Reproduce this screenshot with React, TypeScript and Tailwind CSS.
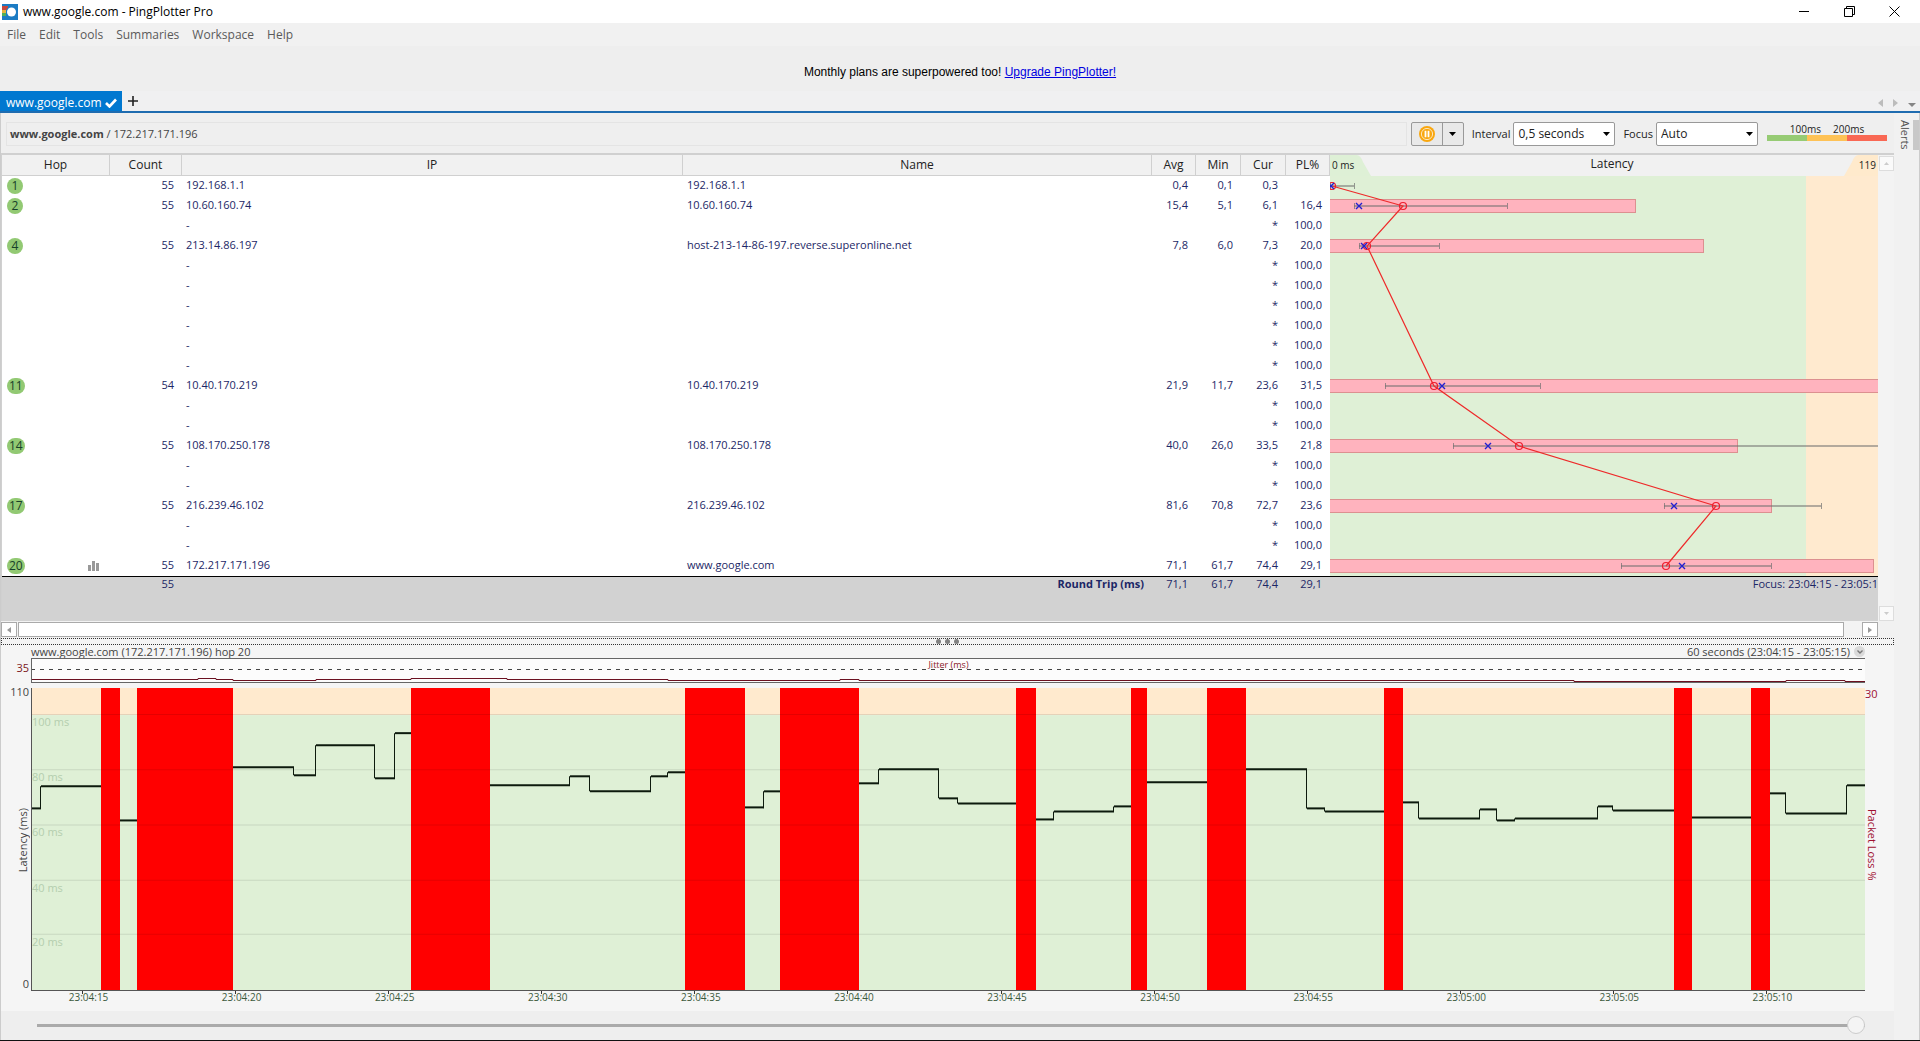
import React from 'react';

interface Hop {
  hop: number;
  count?: number;
  ip?: string;
  name?: string;
  avg?: string;
  min?: string;
  cur?: string;
  pl?: string;
}

interface LatencyMark {
  hop: number;
  bar?: number;
  low: number;
  high: number;
  avg: number;
  cur: number;
}

type Step = [x: number, y: number];

const answered: Hop[] = [
  { hop: 1, count: 55, ip: '192.168.1.1', name: '192.168.1.1', avg: '0,4', min: '0,1', cur: '0,3' },
  { hop: 2, count: 55, ip: '10.60.160.74', name: '10.60.160.74', avg: '15,4', min: '5,1', cur: '6,1', pl: '16,4' },
  { hop: 4, count: 55, ip: '213.14.86.197', name: 'host-213-14-86-197.reverse.superonline.net', avg: '7,8', min: '6,0', cur: '7,3', pl: '20,0' },
  { hop: 11, count: 54, ip: '10.40.170.219', name: '10.40.170.219', avg: '21,9', min: '11,7', cur: '23,6', pl: '31,5' },
  { hop: 14, count: 55, ip: '108.170.250.178', name: '108.170.250.178', avg: '40,0', min: '26,0', cur: '33,5', pl: '21,8' },
  { hop: 17, count: 55, ip: '216.239.46.102', name: '216.239.46.102', avg: '81,6', min: '70,8', cur: '72,7', pl: '23,6' },
  { hop: 20, count: 55, ip: '172.217.171.196', name: 'www.google.com', avg: '71,1', min: '61,7', cur: '74,4', pl: '29,1' },
];

const hops: Hop[] = Array.from({ length: 20 }, (_, i) => answered.find(h => h.hop === i + 1) ?? { hop: i + 1 });

// x values on a 548 wide latency canvas, one row is 20 high
const marks: LatencyMark[] = [
  { hop: 1, low: 0, high: 24, avg: 2, cur: 1 },
  { hop: 2, bar: 305, low: 24, high: 177, avg: 73, cur: 29 },
  { hop: 4, bar: 373, low: 29, high: 109, avg: 37, cur: 34 },
  { hop: 11, bar: 560, low: 55, high: 210, avg: 104, cur: 112 },
  { hop: 14, bar: 407, low: 123, high: 560, avg: 189, cur: 158 },
  { hop: 17, bar: 441, low: 334, high: 491, avg: 386, cur: 344 },
  { hop: 20, bar: 543, low: 291, high: 441, avg: 336, cur: 352 },
];

const rowY = (hop: number) => hop * 20 - 10;

// Timeline canvas is 1834 x 301
const lossBars: Step[] = [
  [70, 89], [106, 202], [380, 459], [654, 714], [749, 828], [985, 1005],
  [1100, 1116], [1176, 1215], [1353, 1372], [1643, 1661], [1720, 1739],
];

// Every run is a start x followed by [end x, y] steps
const runs: { from: number; steps: Step[] }[] = [
  { from: 0, steps: [[10, 120], [70, 98]] },
  { from: 89, steps: [[106, 132]] },
  { from: 202, steps: [[263, 79], [285, 87], [344, 57], [364, 90], [380, 45]] },
  { from: 459, steps: [[539, 97], [559, 88], [620, 103], [637, 88], [654, 84]] },
  { from: 714, steps: [[733, 119], [749, 103]] },
  { from: 828, steps: [[848, 95], [908, 81], [927, 110], [985, 115]] },
  { from: 1005, steps: [[1023, 131], [1083, 123], [1100, 118]] },
  { from: 1116, steps: [[1176, 94]] },
  { from: 1215, steps: [[1276, 81], [1294, 120], [1353, 123]] },
  { from: 1372, steps: [[1388, 114], [1449, 130], [1466, 121], [1484, 132], [1567, 130], [1582, 118], [1643, 122]] },
  { from: 1661, steps: [[1720, 129]] },
  { from: 1739, steps: [[1755, 105], [1816, 125], [1834, 97]] },
];

const jitter: Step[] = [
  [167, 21], [185, 20], [202, 21], [285, 22], [380, 21], [476, 20], [637, 21],
  [809, 22], [828, 21], [1543, 22], [1755, 23], [1814, 22], [1834, 23],
];

const gridLines = [
  { label: '100 ms', top: 27 },
  { label: '80 ms', top: 82 },
  { label: '60 ms', top: 137 },
  { label: '40 ms', top: 192 },
  { label: '20 ms', top: 246 },
];

const times = [
  '23:04:15', '23:04:20', '23:04:25', '23:04:30', '23:04:35', '23:04:40',
  '23:04:45', '23:04:50', '23:04:55', '23:05:00', '23:05:05', '23:05:10',
];

const Logo = () => (
  <svg width="16" height="16" viewBox="0 0 16 16">
    <rect width="16" height="16" fill="#1c7cc4" />
    <rect y="2" width="6" height="4" fill="#c8473b" />
    <rect y="6" width="4" height="3" fill="#e8b33c" />
    <rect y="9" width="4" height="3" fill="#4fae5a" />
    <circle cx="9.5" cy="8" r="5.5" fill="#1c7cc4" />
    <circle cx="9.5" cy="8" r="4.5" fill="#fff" />
  </svg>
);

const TitleBar = () => (
  <header className="flex h-[23px] items-center bg-white pr-[3px] pl-[2px] text-[12px] text-black">
    <Logo />
    <h1 className="ml-[5px] flex-1">www.google.com - PingPlotter Pro</h1>
    <button aria-label="Minimize" className="flex h-full w-[45px] items-center justify-center">
      <svg width="11" height="11" viewBox="0 0 11 11"><path d="M0 5.5h10" stroke="#000" /></svg>
    </button>
    <button aria-label="Restore" className="flex h-full w-[45px] items-center justify-center">
      <svg width="11" height="11" viewBox="0 0 11 11" fill="none" stroke="#000">
        <path d="M.5 2.5h8v8h-8zM2.5 2.5v-2h8v8h-2" />
      </svg>
    </button>
    <button aria-label="Close" className="flex h-full w-[45px] items-center justify-center">
      <svg width="11" height="11" viewBox="0 0 11 11" stroke="#000"><path d="M.5.5l10 10M10.5.5l-10 10" /></svg>
    </button>
  </header>
);

const MenuBar = () => (
  <nav className="flex h-[23px] items-center gap-[13px] bg-[#f1f1f1] pl-[7px] text-[12px] text-[#5a5a5a]">
    {['File', 'Edit', 'Tools', 'Summaries', 'Workspace', 'Help'].map(item => (
      <button key={item}>{item}</button>
    ))}
  </nav>
);

const TabStrip = () => (
  <div className="flex h-5 items-center bg-[#f0f0f1]">
    <button className="flex h-full w-[122px] items-center justify-between bg-[#0078d0] pt-[3px] pr-[5px] pl-[6px] text-[12px] text-white">
      www.google.com
      <svg width="12" height="10" viewBox="0 0 12 10"><path d="M1 5l3.5 3.5L11 1.5" fill="none" stroke="#fff" strokeWidth="2.6" /></svg>
    </button>
    <button aria-label="New tab" className="ml-[6px]">
      <svg width="10" height="10" viewBox="0 0 10 10"><path d="M5 0v10M0 5h10" stroke="#222" strokeWidth="1.6" /></svg>
    </button>
    <div className="ml-auto flex items-center gap-[10px] pt-[3px] pr-1">
      <svg width="5" height="8" viewBox="0 0 5 8"><path d="M5 0v8L0 4z" fill="#bcbcbc" /></svg>
      <svg width="5" height="8" viewBox="0 0 5 8"><path d="M0 0v8l5-4z" fill="#bcbcbc" /></svg>
      <svg width="8" height="8" viewBox="0 0 8 8"><path d="M0 4h8L4 8z" fill="#858585" /></svg>
    </div>
  </div>
);

interface PickerProps {
  id: string;
  label: string;
  value: string;
}

const Picker: React.FC<PickerProps> = ({ id, label, value }) => (
  <div className="flex items-center gap-[3px]">
    <label htmlFor={id}>{label}</label>
    <div className="relative">
      <select id={id} className="h-6 w-[102px] appearance-none rounded-[2px] border border-[#999] bg-white pl-1 text-[12px]">
        <option>{value}</option>
      </select>
      <svg className="pointer-events-none absolute top-[10px] right-[5px]" width="7" height="4" viewBox="0 0 7 4"><path d="M0 0h7L3.5 4z" fill="#000" /></svg>
    </div>
  </div>
);

const Toolbar = () => (
  <div className="flex h-10 items-center bg-[#efefef] pt-[2px] pr-[7px] pl-[5px] text-[11px] text-[#222]">
    <div className="flex h-6 flex-1 items-center border border-[#e4e4e4] pl-[3px] text-[#444]">
      <b>www.google.com</b>&nbsp;/ 172.217.171.196
    </div>
    <div className="mr-2 ml-1 flex h-6 rounded-[2px] border border-[#999] bg-[#e9e9e9]">
      <button aria-label="Pause" className="flex w-[30px] items-center justify-center">
        <svg width="16" height="16" viewBox="0 0 16 16">
          <circle cx="8" cy="8" r="8" fill="#f9a70f" />
          <circle cx="8" cy="8" r="5.6" fill="none" stroke="#fde6bd" />
          <path d="M6.5 4.8v6.4M9.5 4.8v6.4" stroke="#fff" strokeWidth="1.8" />
        </svg>
      </button>
      <button aria-label="Pause options" className="flex w-[21px] items-center justify-center border-l border-[#999]">
        <svg width="7" height="4" viewBox="0 0 7 4"><path d="M0 0h7L3.5 4z" fill="#000" /></svg>
      </button>
    </div>
    <div className="flex gap-2">
      <Picker id="interval" label="Interval" value="0,5 seconds" />
      <Picker id="focus" label="Focus" value="Auto" />
    </div>
    <div className="ml-[9px] w-[120px] pb-1">
      <div className="flex justify-center gap-3 text-[10px] leading-[12px]">
        <span>100ms</span>
        <span>200ms</span>
      </div>
      <div className="flex h-[6px]">
        <div className="flex-1 bg-[#96cb74]" />
        <div className="flex-1 bg-[#fec256]" />
        <div className="flex-1 bg-[#f96854]" />
      </div>
    </div>
  </div>
);

const HopTable = () => (
  <table className="min-w-0 flex-1 table-fixed border-separate border-spacing-0 bg-white text-[11px] leading-[18px] text-[#1c2766]">
    <colgroup>
      <col className="w-[108px]" />
      <col className="w-[72px]" />
      <col className="w-[501px]" />
      <col />
      <col className="w-[44px]" />
      <col className="w-[45px]" />
      <col className="w-[45px]" />
      <col className="w-[44px]" />
    </colgroup>
    <thead>
      <tr className="h-[21px] bg-[#f1f1f1] align-top text-[12px] leading-[20px] text-[#222]">
        {['Hop', 'Count', 'IP', 'Name', 'Avg', 'Min', 'Cur', 'PL%'].map(head => (
          <th key={head} className="border-r border-b border-[#d0d0d0] p-0 font-normal">{head}</th>
        ))}
      </tr>
    </thead>
    <tbody>
      {hops.map(hop => (
        <tr key={hop.hop} className="h-5 align-top">
          <td className="p-0 pt-[2px] pr-[11px] pl-[5px]">
            {hop.count && (
              <div className="flex items-center justify-between">
                <span className="h-4 min-w-4 rounded-full bg-[#92c973] px-[2px] text-center text-[12px] leading-[15px] text-[#17402a]">{hop.hop}</span>
                {hop.hop === 20 && (
                  <svg width="11" height="10" viewBox="0 0 11 10"><path d="M0 4h3v6H0zM4 0h3v10H4zM8 2h3v8H8z" fill="#999" /></svg>
                )}
              </div>
            )}
          </td>
          <td className="p-0 pr-2 text-right">{hop.count}</td>
          <td className="p-0 pl-1">{hop.ip ?? '-'}</td>
          <td className="p-0 pl-1">{hop.name}</td>
          <td className="p-0 pr-2 text-right">{hop.avg}</td>
          <td className="p-0 pr-2 text-right">{hop.min}</td>
          <td className="p-0 pr-2 text-right">{hop.cur ?? '*'}</td>
          <td className="p-0 pr-2 text-right">{hop.count ? hop.pl : '100,0'}</td>
        </tr>
      ))}
    </tbody>
    <tfoot>
      <tr className="h-[45px] bg-[#d2d2d2] text-right align-top leading-[14px]">
        <td className="border-t border-black p-0" />
        <td className="border-t border-black p-0 pr-2">55</td>
        <td className="border-t border-black p-0" />
        <td className="border-t border-black p-0 pr-2 font-bold">Round Trip (ms)</td>
        <td className="border-t border-black p-0 pr-2">71,1</td>
        <td className="border-t border-black p-0 pr-2">61,7</td>
        <td className="border-t border-black p-0 pr-2">74,4</td>
        <td className="border-t border-black p-0 pr-2">29,1</td>
      </tr>
    </tfoot>
  </table>
);

const LatencyGraph = () => (
  <section className="w-[548px] shrink-0 text-[11px]">
    <div className="relative flex h-[21px] items-center justify-between bg-[#f1f1f1] px-[2px] text-[#222]">
      <svg className="absolute inset-0 h-full w-full" viewBox="0 0 548 21" preserveAspectRatio="none">
        <path d="M0 0h27q4 1 6 7l8 14H0z" fill="#def0d6" />
        <path d="M548 0h-20q-4 1-6 7l-8 14h34z" fill="#ffeacc" />
      </svg>
      <span className="relative text-[10px]">0 ms</span>
      <h2 className="relative pb-1 pl-[11px] text-[12px] leading-[16px]">Latency</h2>
      <span className="relative text-[10px]">119</span>
    </div>
    <svg className="block h-[400px] w-full" viewBox="0 0 548 400" preserveAspectRatio="none" fill="none">
      <rect width="476" height="400" fill="#dff0d6" />
      <rect x="476" width="72" height="400" fill="#ffeacf" />
      {marks.map(m => m.bar && (
        <rect key={m.hop} x="-1" y={rowY(m.hop) - 6.5} width={m.bar + 1.5} height="13" fill="#ffb3be" stroke="#dc9090" />
      ))}
      {marks.map(m => (
        <g key={m.hop} stroke="#6f6f6f" strokeOpacity="0.7">
          <path d={`M${m.low} ${rowY(m.hop)}H${m.high}`} strokeWidth="1.5" />
          <path d={`M${m.low + 0.5} ${rowY(m.hop) - 3}v6M${m.high + 0.5} ${rowY(m.hop) - 3}v6`} />
        </g>
      ))}
      <polyline points={marks.map(m => `${m.avg},${rowY(m.hop)}`).join(' ')} stroke="#ee2a2a" strokeWidth="1.2" />
      {marks.map(m => (
        <g key={m.hop}>
          <circle cx={m.avg} cy={rowY(m.hop)} r="3.5" stroke="#ee1c2e" strokeWidth="1.2" />
          <path d={`M${m.cur - 3} ${rowY(m.hop) - 3}l6 6m0-6l-6 6`} stroke="#2222d0" strokeWidth="1.4" />
        </g>
      ))}
    </svg>
    <div className="h-[45px] border-t border-black bg-[#d2d2d2] text-right leading-[14px] text-[#1c2766]">
      Focus: 23:04:15 - 23:05:1
    </div>
  </section>
);

const VerticalScroll = () => (
  <div className="flex w-4 shrink-0 flex-col justify-between bg-[#f3f3f3] pt-px pl-px">
    <button aria-label="Scroll up" className="flex h-[15px] w-[15px] items-center justify-center border border-[#ddd] bg-[#fafafa]">
      <svg width="5" height="3" viewBox="0 0 5 3"><path d="M0 3h5L2.5 0z" fill="#ccc" /></svg>
    </button>
    <button aria-label="Scroll down" className="flex h-[15px] w-[15px] items-center justify-center border border-[#ddd] bg-[#fafafa]">
      <svg width="5" height="3" viewBox="0 0 5 3"><path d="M0 0h5L2.5 3z" fill="#ccc" /></svg>
    </button>
  </div>
);

const HorizontalScroll = () => (
  <div className="mr-4 flex h-[17px] items-center bg-[#f3f3f3]">
    <button aria-label="Scroll left" className="flex h-[15px] w-4 items-center justify-center border border-[#aaa] bg-white">
      <svg width="4" height="6" viewBox="0 0 4 6"><path d="M4 0v6L0 3z" fill="#999" /></svg>
    </button>
    <div className="ml-px h-[15px] flex-1 border border-[#aaa] bg-white" />
    <button aria-label="Scroll right" className="ml-[18px] flex h-[15px] w-4 items-center justify-center border border-[#aaa] bg-white">
      <svg width="4" height="6" viewBox="0 0 4 6"><path d="M0 0v6l4-3z" fill="#999" /></svg>
    </button>
  </div>
);

const Splitter = () => (
  <div className="flex h-[7px] items-center justify-center gap-[4px] border border-dotted border-[#333] bg-[#f4f4f4]">
    <i className="h-[5px] w-[5px] rounded-full bg-[#808080]" />
    <i className="h-[5px] w-[5px] rounded-full bg-[#808080]" />
    <i className="h-[5px] w-[5px] rounded-full bg-[#808080]" />
  </div>
);

const jitterPath = jitter.map(([x, y], i) => `${i ? 'V' : 'M0 '}${y - 0.5}H${x}`).join('');

const Timeline = () => (
  <section className="flex min-h-0 flex-1 flex-col bg-[#f5f5f5] text-[11px] text-[#444]">
    <div className="mr-[29px] ml-[30px] flex h-[13px] items-center justify-between leading-[13px]">
      <h2>www.google.com (172.217.171.196) hop 20</h2>
      <div className="flex items-center gap-1">
        <span>60 seconds (23:04:15 - 23:05:15)</span>
        <button aria-label="Time range" className="flex h-[11px] w-[11px] items-center justify-center rounded-full bg-[#dadada]">
          <svg width="6" height="4" viewBox="0 0 6 4"><path d="M.5.5L3 3 5.5.5" fill="none" stroke="#777" strokeWidth="1.4" /></svg>
        </button>
      </div>
    </div>
    <div className="flex h-[25px]">
      <span className="w-[30px] pr-[2px] text-right leading-[20px] text-[#7c1620]">35</span>
      <div className="relative flex-1 border-y border-l border-[#666] bg-[#fcfcfc]">
        <svg className="block h-full w-full" viewBox="1 0 1833 23" preserveAspectRatio="none" fill="none">
          <path d="M0 10.5H1834" stroke="#444" strokeDasharray="4 5" />
          <path d={jitterPath} stroke="#6b1020" />
        </svg>
        <span className="absolute inset-x-0 top-0 text-center text-[9px] leading-[11px] text-[#8b1a2a]">Jitter (ms)</span>
      </div>
      <span className="w-[29px]" />
    </div>
    <div className="mt-[5px] flex min-h-[302px] flex-1">
      <div className="flex w-[30px] flex-col items-end justify-between pr-[2px]">
        <span className="leading-[8px]">110</span>
        <span className="mt-2 rotate-180 [writing-mode:vertical-rl] leading-[13px]">Latency (ms)</span>
        <span className="leading-[15px]">0</span>
      </div>
      <div className="relative flex-1 border-b border-l border-[#555]">
        <svg className="absolute inset-0 h-full w-full" viewBox="1 0 1833 301" preserveAspectRatio="none">
          <rect width="1834" height="27" fill="#ffeace" />
          <rect y="27" width="1834" height="274" fill="#dff0d6" />
        </svg>
        <div className="absolute inset-0">
          {gridLines.map(line => (
            <span key={line.label} className="absolute left-0 leading-[13px] text-[#b4ceae]" style={{ top: `${(line.top / 301) * 100}%` }}>{line.label}</span>
          ))}
        </div>
        <svg className="absolute inset-0 h-full w-full" viewBox="1 0 1833 301" preserveAspectRatio="none">
          {lossBars.map(([from, to]) => (
            <rect key={from} x={from} width={to - from} height="301" fill="#f00" />
          ))}
          {gridLines.map(line => (
            <path key={line.label} d={`M0 ${line.top - 0.5}H1834`} stroke="#000" strokeOpacity="0.1" />
          ))}
          {runs.map(run => run.steps.map(([x, y], i) => {
            const start = i ? run.steps[i - 1][0] : run.from;
            return (
              <g key={x} stroke="#0d1a0d">
                <path d={`M${start} ${y}H${x}`} strokeWidth="2" />
                {i > 0 && <path d={`M${start - 0.5} ${run.steps[i - 1][1]}V${y}`} />}
              </g>
            );
          }))}
        </svg>
      </div>
      <div className="flex w-[29px] flex-col text-[#a01030]">
        <span className="leading-[11px]">30</span>
        <div className="flex flex-1 items-center">
          <span className="[writing-mode:vertical-rl] leading-[14px]">Packet Loss %</span>
        </div>
      </div>
    </div>
    <div className="mr-[51px] ml-[5px] flex h-5">
      {times.map(time => (
        <div key={time} className="flex flex-1 flex-col items-center text-[#3c5a3c]">
          <i className="h-[3px] w-px bg-[#333]" />
          <span className="pl-3 text-[10px] leading-[7px]">{time}</span>
        </div>
      ))}
    </div>
    <div className="flex h-[29px] items-center bg-[#eee] pr-[29px] pl-[36px]">
      <input
        type="range"
        aria-label="Timeline position"
        defaultValue={100}
        className="h-[18px] w-full appearance-none bg-transparent [&::-webkit-slider-runnable-track]:h-[3px] [&::-webkit-slider-runnable-track]:bg-[#aaa] [&::-webkit-slider-thumb]:mt-[-8px] [&::-webkit-slider-thumb]:h-[18px] [&::-webkit-slider-thumb]:w-[18px] [&::-webkit-slider-thumb]:appearance-none [&::-webkit-slider-thumb]:rounded-full [&::-webkit-slider-thumb]:border [&::-webkit-slider-thumb]:border-[#ccc] [&::-webkit-slider-thumb]:bg-[#f4f4f4]"
      />
    </div>
  </section>
);

const App: React.FC = () => (
  <div className="flex min-h-screen flex-col border-b border-[#111] bg-[#f1f1f1] font-['Open_Sans','Noto_Sans',sans-serif]">
    <TitleBar />
    <MenuBar />
    <p className="h-[45px] bg-[#eee] pt-[18px] text-center font-['Liberation_Sans',Arial,sans-serif] text-[12px] leading-[16px] text-black">
      Monthly plans are superpowered too! <a href="#upgrade" className="text-[#0000e0] underline">Upgrade PingPlotter!</a>
    </p>
    <TabStrip />
    <div className="flex flex-1 border-t-2 border-[#1f6cb0]">
      <main className="flex min-w-0 flex-1 flex-col border-l border-[#ccc]">
        <Toolbar />
        <div className="flex border-t-2 border-l border-[#d0d0d0]">
          <HopTable />
          <LatencyGraph />
          <VerticalScroll />
        </div>
        <HorizontalScroll />
        <Splitter />
        <Timeline />
      </main>
      <aside className="flex w-[26px] justify-between border-r border-[#ccc] pt-[7px]">
        <button className="h-[30px] pl-[3px] text-[11px] leading-[16px] text-[#555] [writing-mode:vertical-rl]">Alerts</button>
        <div className="h-[30px] w-[6px] bg-[#c8c8c8]" />
      </aside>
    </div>
  </div>
);

export default App;
